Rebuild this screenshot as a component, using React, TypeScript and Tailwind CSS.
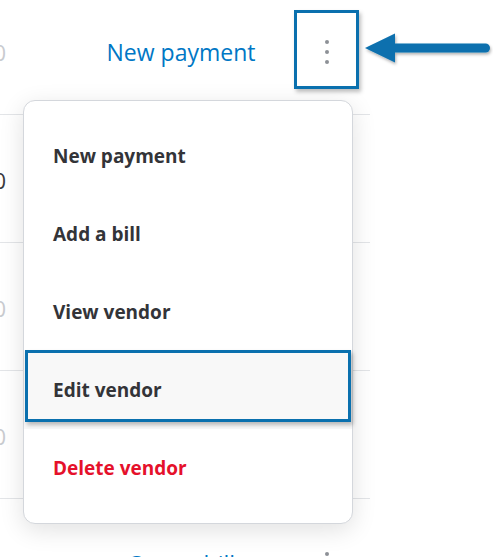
import { Fragment } from "react";

const ROWS = [
  { amount: "0", amountTone: "text-[#c9cbcf]", action: "New payment" },
  { amount: "0", amountTone: "text-[#393a3d]", action: "New payment" },
  { amount: "0", amountTone: "text-[#c9cbcf]", action: "New payment" },
  { amount: "0", amountTone: "text-[#c9cbcf]", action: "New payment" },
  { amount: "0", amountTone: "text-[#393a3d]", action: "Create bill" },
];

const MENU = [
  { label: "New payment" },
  { label: "Add a bill" },
  { label: "View vendor" },
  { label: "Edit vendor", active: true },
  { label: "Delete vendor", danger: true },
];

function Kebab() {
  return (
    <div className="flex flex-col items-center gap-[6px]">
      <span className="h-[4px] w-[4px] rounded-full bg-[#8d9096]" />
      <span className="h-[4px] w-[4px] rounded-full bg-[#8d9096]" />
      <span className="h-[4px] w-[4px] rounded-full bg-[#8d9096]" />
    </div>
  );
}

export default function App() {
  return (
    <div
      className="relative h-[557px] w-[493px] overflow-hidden bg-white"
      style={{ fontFamily: '"Open Sans", "Liberation Sans", sans-serif' }}
    >
      {/* table rows behind the menu */}
      <div className="-mt-[13px] flex w-[370px] flex-col">
        {ROWS.map((row, i) => (
          <div
            key={i}
            className="flex h-[128px] shrink-0 items-center border-b border-[#e3e5e8]"
          >
            <div className={`-ml-[94px] w-[100px] pt-[3px] text-right text-[22px] ${row.amountTone}`}>
              {row.amount}
            </div>
            <div className="ml-[60px] w-[230px] pt-[3px] text-center text-[23px] text-[#0077c5]">
              {row.action}
            </div>
            <div className="flex w-[62px] justify-center pt-[2px]">
              <Kebab />
            </div>
          </div>
        ))}
      </div>

      {/* dropdown menu */}
      <div className="absolute left-[23px] top-[100px] flex w-[330px] flex-col rounded-[12px] border border-[#d4d7dc] bg-white py-[16px] shadow-[0_6px_24px_rgba(0,0,0,0.12)]">
        {MENU.map((item) => (
          <Fragment key={item.label}>
            <div
              className={`flex h-[78px] items-center px-[29px] text-[19px] font-bold ${
                item.danger ? "text-[#e5112b]" : "text-[#333438]"
              } ${item.active ? "bg-[#f8f8f8]" : ""}`}
            >
              {item.label}
            </div>
          </Fragment>
        ))}
      </div>

      {/* annotation: highlight around the kebab */}
      <div className="absolute left-[294px] top-[10px] h-[79px] w-[65px] border-[3px] border-[#0a70ae] shadow-[2px_3px_4px_rgba(0,0,0,0.25)]" />

      {/* annotation: highlight around Edit vendor */}
      <div className="absolute left-[25px] top-[350px] h-[72px] w-[326px] border-[3px] border-[#0a70ae] shadow-[2px_3px_4px_rgba(0,0,0,0.25)]" />

      {/* annotation: arrow */}
      <svg
        className="absolute left-[360px] top-[26px]"
        width="133"
        height="46"
        viewBox="0 0 133 46"
      >
        <defs>
          <filter id="sh" x="-10%" y="-20%" width="130%" height="160%">
            <feDropShadow dx="1" dy="2" stdDeviation="1.5" floodColor="#000" floodOpacity="0.3" />
          </filter>
        </defs>
        <g filter="url(#sh)" fill="#0a70ae">
          <path d="M5 22 L35 7.5 L35 36.5 Z" />
          <rect x="30" y="17.5" width="100" height="9" rx="4.5" />
        </g>
      </svg>
    </div>
  );
}
